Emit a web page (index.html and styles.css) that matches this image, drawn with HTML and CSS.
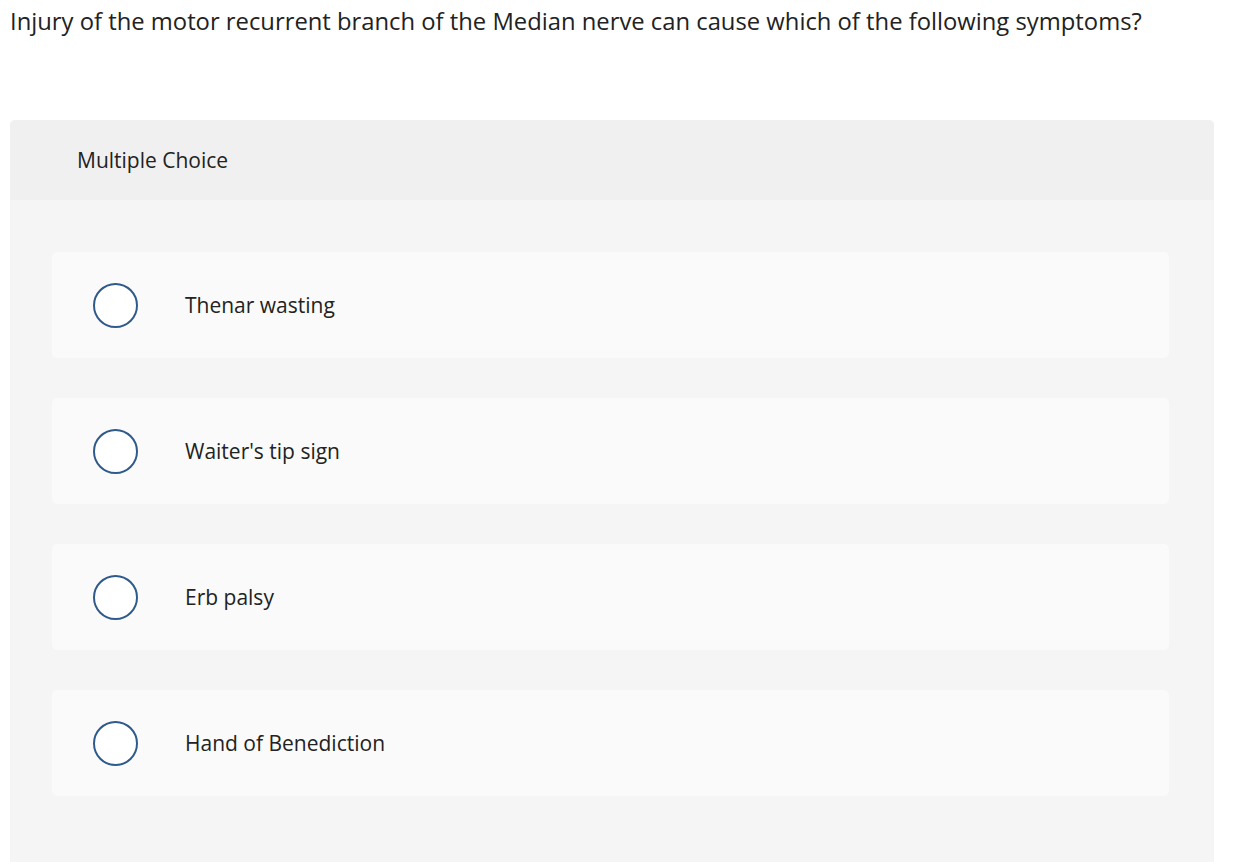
FILE: index.html
```html
<!DOCTYPE html>
<html>
<head>
<meta charset="utf-8">
<link rel="stylesheet" href="styles.css">
</head>
<body>
<div class="page">
  <p class="question">Injury of the motor recurrent branch of the Median nerve can cause which of the following symptoms?</p>
  <div class="panel">
    <div class="panel-head">Multiple Choice</div>
    <div class="panel-body">
      <div class="option"><span class="radio"></span><span class="label">Thenar wasting</span></div>
      <div class="option"><span class="radio"></span><span class="label">Waiter's tip sign</span></div>
      <div class="option"><span class="radio"></span><span class="label">Erb palsy</span></div>
      <div class="option"><span class="radio"></span><span class="label">Hand of Benediction</span></div>
    </div>
  </div>
</div>
</body>
</html>
```
FILE: styles.css
```css
html, body {
  margin: 0;
  padding: 0;
  background: #ffffff;
}
body {
  font-family: "Open Sans", "Liberation Sans", sans-serif;
  color: #222222;
}
.page {
  padding: 0 30px 0 10px;
  height: 862px;
  overflow: hidden;
}
.question {
  margin: 0;
  padding-top: 6px;
  height: 120px;
  box-sizing: border-box;
  font-size: 23.8px;
  line-height: 30px;
  color: #222;
  white-space: nowrap;
}
.panel {
  border-radius: 5px 5px 0 0;
  overflow: hidden;
  background: #f5f5f5;
}
.panel-head {
  background: #f0f0f0;
  height: 80px;
  padding-left: 67px;
  display: flex;
  align-items: center;
  font-size: 21px;
  box-sizing: border-box;
}
.panel-body {
  padding: 52px 45px 80px 42px;
  display: flex;
  flex-direction: column;
  gap: 40px;
}
.option {
  background: #fafafa;
  border-radius: 5px;
  height: 106px;
  display: flex;
  align-items: center;
  padding-left: 41px;
}
.radio {
  width: 41px;
  height: 41px;
  border: 2px solid #2f5b8c;
  border-radius: 50%;
  background: #fff;
  flex: none;
}
.label {
  margin-left: 47px;
  font-size: 21px;
  color: #222;
}
```
